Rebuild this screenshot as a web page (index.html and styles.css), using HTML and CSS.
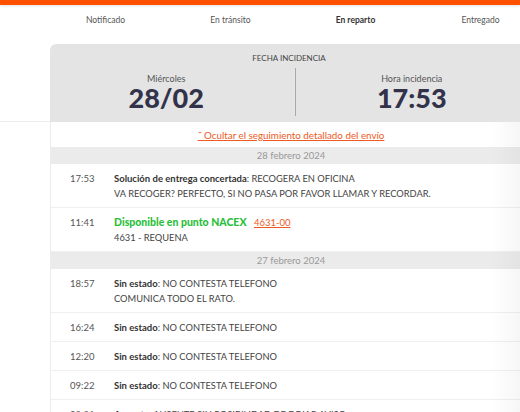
FILE: index.html
```html
<!DOCTYPE html>
<html lang="es">
<head>
<meta charset="utf-8">
<title>Seguimiento</title>
<link rel="stylesheet" href="styles.css">
</head>
<body>
<div class="topbar"></div>
<div class="steps">
  <span class="step">Notificado</span>
  <span class="step">En tránsito</span>
  <span class="step current">En reparto</span>
  <span class="step">Entregado</span>
</div>
<div class="upper">
  <div class="gutter"></div>
  <div class="card">
    <div class="card-title">FECHA INCIDENCIA</div>
    <div class="card-cols">
      <div class="card-col">
        <div class="card-label">Miércoles</div>
        <div class="card-value">28/02</div>
      </div>
      <div class="card-divider"></div>
      <div class="card-col">
        <div class="card-label">Hora incidencia</div>
        <div class="card-value">17:53</div>
      </div>
    </div>
  </div>
</div>
<div class="panel">
  <div class="toggle"><a href="#" class="toggle-link">˝ Ocultar el seguimiento detallado del envío</a></div>
  <div class="day">28 febrero 2024</div>
  <div class="event">
    <div class="time">17:53</div>
    <div class="desc"><b>Solución de entrega concertada</b>: RECOGERA EN OFICINA<br>VA RECOGER? PERFECTO, SI NO PASA POR FAVOR LLAMAR Y RECORDAR.</div>
  </div>
  <div class="event">
    <div class="time">11:41</div>
    <div class="desc"><b class="ok">Disponible en punto NACEX</b> <a href="#" class="code">4631-00</a><br>4631 - REQUENA</div>
  </div>
  <div class="day">27 febrero 2024</div>
  <div class="event">
    <div class="time">18:57</div>
    <div class="desc"><b>Sin estado</b>: NO CONTESTA TELEFONO<br>COMUNICA TODO EL RATO.</div>
  </div>
  <div class="event">
    <div class="time">16:24</div>
    <div class="desc"><b>Sin estado</b>: NO CONTESTA TELEFONO</div>
  </div>
  <div class="event">
    <div class="time">12:20</div>
    <div class="desc"><b>Sin estado</b>: NO CONTESTA TELEFONO</div>
  </div>
  <div class="event">
    <div class="time">09:22</div>
    <div class="desc"><b>Sin estado</b>: NO CONTESTA TELEFONO</div>
  </div>
  <div class="event">
    <div class="time">09:21</div>
    <div class="desc"><b>Ausente</b>: AUSENTE SIN POSIBILIDAD DE DEJAR AVISO</div>
  </div>
</div>
</body>
</html>
```
FILE: styles.css
```css
html, body {
  margin: 0;
  padding: 0;
  background: #fff;
  overflow: hidden;
}
body {
  font-family: Lato, "Noto Sans", sans-serif;
  color: #444;
  width: 520px;
  height: 412px;
  position: relative;
}
.topbar {
  height: 5px;
  background: #fe5000;
  box-shadow: 0 1px 3px rgba(0,0,0,0.12);
}
.steps {
  display: flex;
  padding-left: 43px;
  height: 39px;
  box-sizing: border-box;
  padding-top: 9px;
}
.step {
  flex: 0 0 125px;
  text-align: center;
  font-size: 8.5px;
  line-height: 12px;
  color: #555;
}
.step.current {
  font-weight: 700;
  color: #333;
}
.upper {
  display: flex;
  align-items: flex-end;
}
.gutter {
  width: 50px;
  flex: 0 0 50px;
  border-bottom: 1px solid #ececec;
}
.card {
  flex: 0 0 478px;
  height: 78px;
  box-sizing: border-box;
  background: #e4e4e4;
  border-radius: 6px 0 0 0;
  padding-top: 8px;
  display: flex;
  flex-direction: column;
}
.card-title {
  text-align: center;
  font-size: 8px;
  line-height: 12px;
  color: #444;
}
.card-cols {
  display: flex;
  margin-top: 4px;
  height: 48px;
}
.card-col {
  flex: 1;
  text-align: center;
}
.card-col:first-child {
  padding-right: 12px;
}
.card-divider {
  width: 1px;
  background: #a9a9a9;
}
.card-label {
  font-size: 9px;
  line-height: 11px;
  margin-top: 5px;
  color: #555;
}
.card-value {
  font-size: 27px;
  line-height: 28px;
  font-weight: 900;
  color: #32324a;
}
.panel {
  margin-left: 50px;
  width: 480px;
  border-left: 1px solid #ececec;
  position: relative;
}
.panel::after {
  content: "";
  position: absolute;
  top: 0;
  bottom: 0;
  right: 10px;
  width: 30px;
  background: linear-gradient(to right, rgba(0,0,0,0), rgba(0,0,0,0.035));
  pointer-events: none;
}
.toggle {
  height: 25px;
  display: flex;
  align-items: center;
  justify-content: center;
}
.toggle-link {
  font-size: 9.8px;
  color: #ee5a24;
  text-decoration: underline;
}
.day {
  height: 17px;
  background: #ebebeb;
  text-align: center;
  font-size: 9.5px;
  line-height: 17px;
  color: #999;
}
.event {
  display: flex;
  padding: 7px 0 6px 19px;
  border-bottom: 1px solid #efefef;
  font-size: 9.3px;
  line-height: 15px;
}
.event:last-child {
  border-bottom: 0;
}
.time {
  flex: 0 0 44px;
  font-size: 9.5px;
  color: #555;
}
.desc {
  color: #444;
}
.desc b {
  color: #333;
  font-weight: 700;
  font-size: 9.5px;
}
.desc b.ok {
  color: #2bbf3c;
  font-weight: 900;
  font-size: 10.5px;
}
.code {
  color: #ee5a24;
  text-decoration: underline;
  margin-left: 5px;
  font-size: 9.5px;
}
```
